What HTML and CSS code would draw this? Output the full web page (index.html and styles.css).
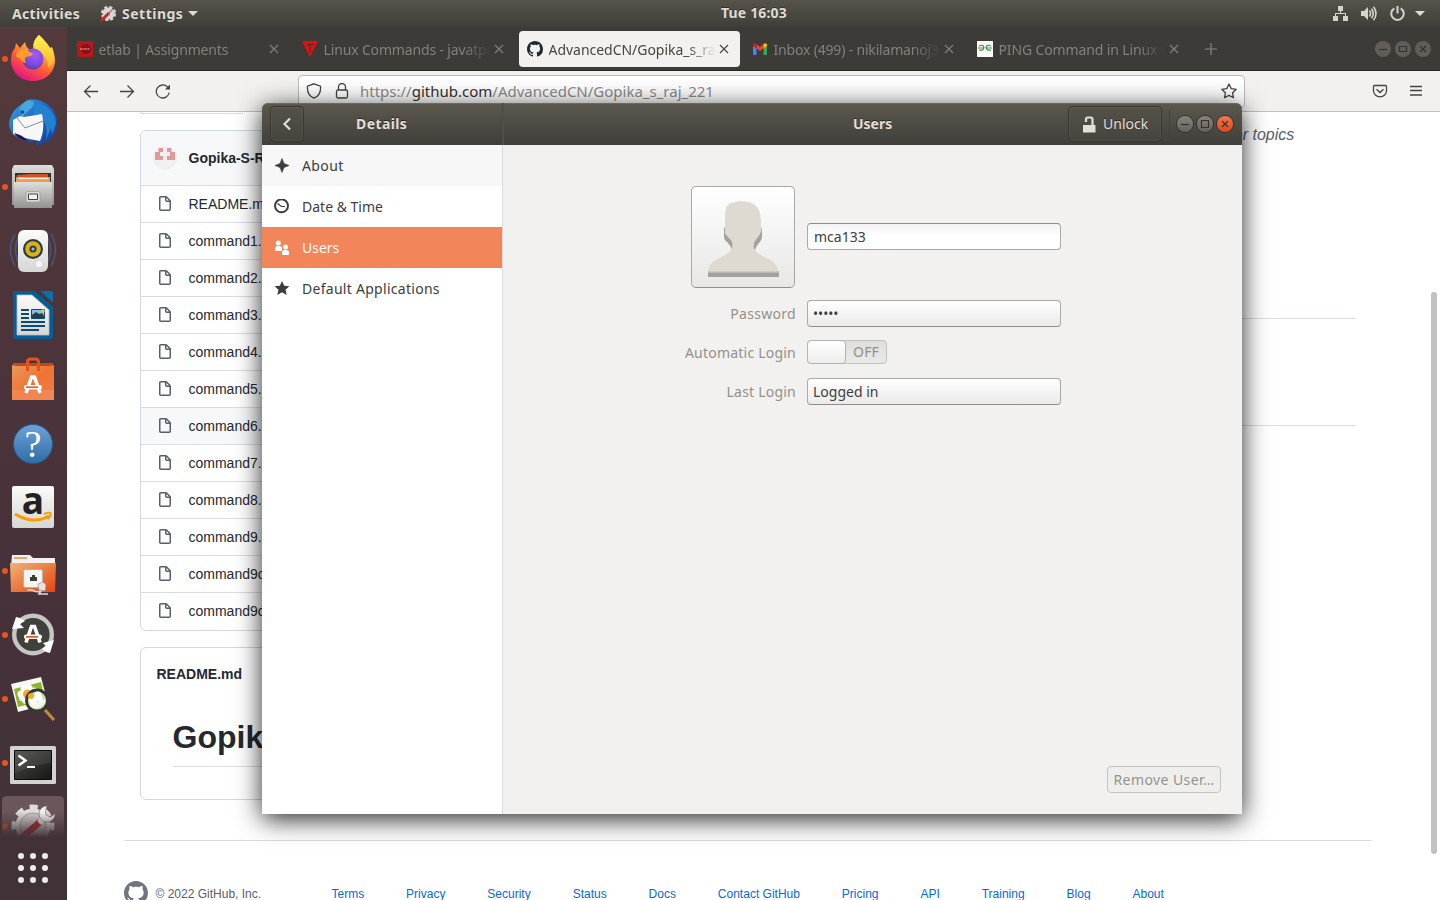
FILE: index.html
```html
<!DOCTYPE html>
<html lang="en">
<head>
<meta charset="utf-8">
<title>Desktop</title>
<link rel="stylesheet" href="styles.css">
</head>
<body>
<svg class="defs" width="0" height="0" aria-hidden="true">
  <defs>
    <symbol id="file" viewBox="0 0 16 16"><path fill="#57606a" fill-rule="evenodd" d="M3.75 1.5a.25.25 0 00-.25.25v11.5c0 .138.112.25.25.25h8.5a.25.25 0 00.25-.25V6H9.75A1.75 1.75 0 018 4.25V1.5H3.75zm5.75.56v2.19c0 .138.112.25.25.25h2.19L9.5 2.06zM2 1.75C2 .784 2.784 0 3.75 0h5.086c.464 0 .909.184 1.237.513l3.414 3.414c.329.328.513.773.513 1.237v8.086A1.75 1.75 0 0112.25 15h-8.5A1.75 1.75 0 012 13.25V1.75z"/></symbol>
    <symbol id="octocat" viewBox="0 0 16 16"><path fill="currentColor" d="M8 0C3.58 0 0 3.58 0 8c0 3.54 2.29 6.53 5.47 7.59.4.07.55-.17.55-.38 0-.19-.01-.82-.01-1.49-2.01.37-2.53-.49-2.69-.94-.09-.23-.48-.94-.82-1.13-.28-.15-.68-.52-.01-.53.63-.01 1.08.58 1.23.82.72 1.21 1.87.87 2.33.66.07-.52.28-.87.51-1.07-1.78-.2-3.64-.89-3.64-3.95 0-.87.31-1.59.82-2.15-.08-.2-.36-1.02.08-2.12 0 0 .67-.21 2.2.82.64-.18 1.32-.27 2-.27.68 0 1.36.09 2 .27 1.53-1.04 2.2-.82 2.2-.82.44 1.1.16 1.92.08 2.12.51.56.82 1.27.82 2.15 0 3.07-1.87 3.75-3.65 3.95.29.25.54.73.54 1.48 0 1.07-.01 1.93-.01 2.2 0 .21.15.46.55.38A8.013 8.013 0 0016 8c0-4.42-3.58-8-8-8z"/></symbol>
    <symbol id="cross" viewBox="0 0 10 10"><path d="M1 1l8 8M9 1l-8 8" stroke="currentColor" stroke-width="1.1" fill="none"/></symbol>
    <linearGradient id="ffBody" x1=".8" y1=".1" x2=".3" y2="1"><stop offset="0" stop-color="#fff44f"/><stop offset=".3" stop-color="#ffa930"/><stop offset=".6" stop-color="#ff5a36"/><stop offset="1" stop-color="#e3128a"/></linearGradient>
    <linearGradient id="ffTop" x1="0" y1="0" x2="0" y2="1"><stop offset="0" stop-color="#fff750"/><stop offset="1" stop-color="#ffb02e"/></linearGradient>
    <radialGradient id="ffOrb" cx=".6" cy=".3" r=".8"><stop offset="0" stop-color="#a05bf6"/><stop offset=".6" stop-color="#7a4be0"/><stop offset="1" stop-color="#4a3a9e"/></radialGradient>
    <linearGradient id="tb" x1="0" y1="0" x2="1" y2="1"><stop offset="0" stop-color="#3aa7ea"/><stop offset=".5" stop-color="#1c63c2"/><stop offset="1" stop-color="#163c8c"/></linearGradient>
    <linearGradient id="steel" x1="0" y1="0" x2="0" y2="1"><stop offset="0" stop-color="#dededc"/><stop offset="1" stop-color="#929290"/></linearGradient>
    <linearGradient id="white" x1="0" y1="0" x2="0" y2="1"><stop offset="0" stop-color="#fbfbfa"/><stop offset="1" stop-color="#d6d6d4"/></linearGradient>
    <linearGradient id="bag" x1="0" y1="0" x2="1" y2="1"><stop offset="0" stop-color="#e69a5c"/><stop offset=".5" stop-color="#f07434"/><stop offset="1" stop-color="#ee7d47"/></linearGradient>
    <linearGradient id="blue" x1="0" y1="0" x2="0" y2="1"><stop offset="0" stop-color="#6fa2d6"/><stop offset="1" stop-color="#2d6ea6"/></linearGradient>
    <linearGradient id="folder" x1="0" y1="0" x2="1" y2="1"><stop offset="0" stop-color="#efb47a"/><stop offset=".45" stop-color="#ea8145"/><stop offset="1" stop-color="#e4440f"/></linearGradient>
    <linearGradient id="screen" x1="0" y1="0" x2="1" y2="1"><stop offset="0" stop-color="#4c4c4a"/><stop offset="1" stop-color="#161616"/></linearGradient>
  </defs>
</svg>

<div class="desktop">
  <header class="panel">
    <div class="panel-left">
      <span class="panel-text activities">Activities</span>
      <svg class="panel-app" viewBox="0 0 16 16"><circle cx="8.5" cy="7.5" r="6" fill="#dad8d4"/><circle cx="8.5" cy="7.5" r="6.4" fill="none" stroke="#dad8d4" stroke-width="2.400" stroke-dasharray="3 2.030"/><path d="M1.800 14L8.500 7.500" stroke="#c22b2b" stroke-width="3" stroke-linecap="round"/><path d="M8.500 7.500l4-4" stroke="#8a8884" stroke-width="1.600"/></svg>
      <span class="panel-text settings">Settings</span>
      <i class="caret"></i>
    </div>
    <span class="panel-text clock">Tue 16:03</span>
    <div class="panel-right">
      <svg width="15" height="15" viewBox="0 0 15 15" fill="#d6d3cd"><path d="M5 0h5v5H8v2h5v3h2v5h-5v-5h2V8H3v2h2v5H0v-5h2V7h5V5H5z"/></svg>
      <svg width="16" height="15" viewBox="0 0 16 15"><path d="M0 5h3l4-4v13l-4-4H0z" fill="#d6d3cd"/><path d="M8.5 4.5q2 3 0 6M10.5 2.7q3.4 4.8 0 9.6M12.5.8q5 6.700 0 13.4" fill="none" stroke="#d6d3cd" stroke-width="1.600"/></svg>
      <svg width="15" height="15" viewBox="0 0 15 15" fill="none" stroke="#d6d3cd" stroke-width="2"><path d="M4.3 2.4a6.2 6.2 0 106.4 0M7.5 0v7.5"/></svg>
      <i class="caret"></i>
    </div>
  </header>

  <nav class="dock">
    <div class="app running"><svg viewBox="0 0 48 48"><path fill="url(#ffBody)" d="M30 0c5 5 8 8 10 12 3 2 6 7 6 13C46 37 37 46 24 46S2 37 2 25c0-5 1-9 4-12l1-5 4 5 5-6c1 4 2 6 4 7h4c0-6 2-10 6-14z"/><path fill="url(#ffTop)" d="M30 0c5 5 9 9 11 13l2-1c4 10 2 17-4 21 1-8-4-14-10-17-4-3-5-6-4-9 1-3 3-5 5-7z"/><circle cx="24" cy="24" r="10.500" fill="url(#ffOrb)"/><path fill="#ff9b2c" d="M7 22c0-6 5-9 11-8 2 3 4 4 6 4-1 4-4 3-7 4-2 2-1 4 0 6-5-1-6-6-10-6z"/></svg></div>
    <div class="app"><svg viewBox="0 0 48 48"><path fill="url(#tb)" d="M15 4C18-1 24 0 29 1c9 2 17 9 19 19 1 9-2 16-7 21l-4 3 1-3c-5 4-8 5-12 6l3-5C14 44 3 39 0 27 0 17 6 8 15 4z"/><path fill="#47a8e0" d="M11 9c3-7 9-9 14-6 0 6-6 8-10 13l-2 3z"/><path fill="#2480d0" d="M25 5c12-1 22 8 22 20l-4 10-1-6-5 12c2-13 0-22-12-25z"/><path fill="#f7f7f8" d="M4 21l7-4 4 1 18-3c2 9 2 18-2 27C20 40 10 38 4 35z"/><path d="M8 19l8 10 18-7" fill="none" stroke="#8a8d94"/><path fill="#261252" d="M5 34c7 2 10 4 14 8-7-1-11-4-14-8z"/><circle cx="13.500" cy="13" r="1.800" fill="#194d84"/></svg></div>
    <div class="app running"><svg viewBox="0 0 48 48"><path fill="url(#steel)" d="M5 2h38l2 4v36H3V6z"/><path d="M6 10h36v9H6z" fill="#33302c"/><path fill="#cf5624" d="M8 12l13-1 18 0v8H8z"/><path fill="#f19a55" d="M7 14h34v5H7z"/><path d="M9 15.500h30" stroke="#fff2d8" stroke-width="1.200"/><path fill="url(#steel)" d="M5 19h38v26H5z"/><rect x="17" y="28.500" width="14" height="10.500" rx="1.500" fill="#d9d9d7" stroke="#999" stroke-width=".7"/><path d="M19.500 31h9v5.500h-9z" fill="#f0f0ef" stroke="#444"/></svg></div>
    <div class="app"><svg viewBox="0 0 48 48"><path d="M6 7Q-3 22 6 39M10 9q-7 13 0 28M42 7q9 15 0 32M38 9q7 13 0 28" fill="none" stroke="#47577e" stroke-width="1.500"/><rect x="9" y="3" width="30" height="42" rx="6" fill="url(#white)"/><circle cx="24" cy="22" r="10" fill="#34383c"/><circle cx="24" cy="22" r="7.800" fill="#d4b31c"/><circle cx="24" cy="22" r="3.600" fill="#33414b"/><circle cx="24" cy="22" r="1.500" fill="#aeb8c0"/><circle cx="30" cy="37" r="4" fill="#f7f7f7" stroke="#c4c4c2" stroke-width=".7"/><path d="M15 35h4v4h-4z" fill="#dadada"/></svg></div>
    <div class="app"><svg viewBox="0 0 48 48"><path fill="#065e96" d="M6 0h19l19 17v29q0 2-2 2H6q-2 0-2-2V2q0-2 2-2z"/><path d="M31 0h11q2 0 2 2v10z" fill="#0b6fae"/><path d="M25 0h6l13 12v5z" fill="#4d3439"/><path fill="#065e96" d="M22 0h4l18 16v4z"/><path fill="url(#white)" stroke="#b9bdc0" stroke-width=".8" d="M8 4h15l17 15v25H8z"/><path d="M12 19h8M12 23h8M12 27h8M12 31h24M12 35h24M12 39h18" stroke="#0a4a76" stroke-width="1.800"/><path fill="#7fc1ec" stroke="#0a4a76" d="M22.500 18.500h13v9h-13z"/><path fill="#2d3c43" d="M23 27v-3l4-3 3 2 3-1 2 3v2z"/><circle cx="34" cy="20" r="1.700" fill="#f1cd3b"/></svg></div>
    <div class="app"><svg viewBox="0 0 48 48"><path fill="#bf4a17" d="M4 8h40v7H4z"/><path fill="url(#bag)" d="M3 10l4 1h34l4-1v35H3z"/><path fill="#f3905f" d="M3 35h42v10H3z" opacity=".6"/><path d="M18.500 16V7q0-3 3-3h5q3 0 3 3v9" stroke="#e4531c" stroke-width="3" fill="none"/><path d="M17 38L22.500 22h3L31 38" stroke="#fff" stroke-width="3.600" fill="none"/><rect x="15" y="30" width="18" height="4.500" rx="2" fill="#fff"/><path d="M17 32.200h12" stroke="#ec5b22" stroke-width="1.600"/></svg></div>
    <div class="app"><svg viewBox="0 0 48 48"><circle cx="24" cy="25" r="19.500" fill="url(#blue)" stroke="#245c90"/><text class="glyph help" x="24" y="38" text-anchor="middle">?</text></svg></div>
    <div class="app"><svg viewBox="0 0 48 48"><rect x="3" y="3" width="42" height="42" rx="2" fill="url(#white)"/><text class="glyph amazon" x="24" y="31" text-anchor="middle">a</text><path d="M6 31q18 11 34 2" stroke="#ff9900" stroke-width="3" fill="none"/><path d="M35 31q5-2 6.500-1 .5 2-2.500 6" stroke="#ff9900" stroke-width="1.900" fill="none"/></svg></div>
    <div class="app running"><svg viewBox="0 0 48 48"><path fill="#f2f1f0" d="M3 8h18l3 3h22v9H2z"/><path d="M5 11h13" stroke="#f0a173" stroke-width="2"/><path fill="url(#folder)" d="M1 16h46l-1 29H2z"/><rect x="14.500" y="22.500" width="19" height="18" rx="2" fill="#f4f4f2" stroke="#b5b0aa"/><path fill="#3d3d38" d="M21 34v-4h2v-2h3v2h2v4z"/><path d="M18 43c8-2 6 4 14 1l-2 3 9 0" stroke="#ddd" stroke-width="1.500" fill="none"/><path fill="#e4e4e2" stroke="#999" stroke-width=".7" d="M29 37l5-2 3 3-1 6-6-1z"/></svg></div>
    <div class="app running"><svg viewBox="0 0 48 48"><circle cx="24" cy="23.500" r="18.800" fill="#41413c" stroke="#c6c6c4" stroke-width="4.400"/><path d="M17 31.500L22.500 15.500h3L31 31.500" stroke="#fff" stroke-width="3.600" fill="none"/><rect x="15" y="23.500" width="18" height="4.600" rx="2" fill="#fff"/><path d="M17 25.800h12" stroke="#e95420" stroke-width="1.800"/><path fill="#fff" d="M7 6L3 18l12-1-4-4 5-3-5-3zM41 42l4-13-11 3 3 3-4 3 4 3z"/></svg></div>
    <div class="app running"><svg viewBox="0 0 48 48"><path fill="#f7f7f4" d="M2 9L32 2l7 27-30 8z"/><path fill="#91b52a" d="M5 14l27-7 4 18-27 7z"/><g fill="#fff"><circle cx="12" cy="19" r="3.500"/><circle cx="15" cy="14" r="3.500"/><circle cx="20" cy="13" r="3.500"/><circle cx="25" cy="16" r="3.500"/><circle cx="25" cy="21" r="3.500"/><circle cx="17" cy="25" r="4"/><circle cx="13" cy="23" r="3"/></g><circle cx="18.500" cy="19" r="4.500" fill="#f1ab23"/><circle cx="28" cy="25.500" r="10.500" fill="#cfdcae" stroke="#353735" stroke-width="2.800"/><path d="M20 28q9 1 16-4v4q-7 9-15 3z" fill="#fff" opacity=".8"/><g fill="#fff"><circle cx="24" cy="25" r="4"/><circle cx="29" cy="20" r="3.500"/><circle cx="31" cy="24" r="3"/></g><circle cx="22" cy="21" r="3" fill="#f1ab23"/><path d="M36 35l9 10" stroke="#bc8c3c" stroke-width="3.200"/></svg></div>
    <div class="app running"><svg viewBox="0 0 48 48"><rect x="1" y="7" width="46" height="38" rx="1.500" fill="#d2d2d0"/><path fill="url(#screen)" stroke="#0c0c0c" d="M5.500 11.500h37v29h-37z"/><path d="M6 12h36v12Q24 26 6 34z" fill="#fff" opacity=".08"/><path d="M9.500 16.500l7 5-7 5" stroke="#fff" stroke-width="2.500" fill="none"/><path d="M18 28h8" stroke="#fff" stroke-width="2"/></svg></div>
    <div class="app running active"><svg viewBox="0 0 48 48"><circle cx="24" cy="23" r="17.500" fill="#dddcda"/><circle cx="24" cy="23" r="19" fill="none" stroke="#dddcda" stroke-width="5" stroke-dasharray="8.200 6.720" stroke-dashoffset="4"/><circle cx="24" cy="23" r="13" fill="#cfcbcb" stroke="#a39d9e"/><path d="M10 37l21-18" stroke="#b72424" stroke-width="6.500"/><path d="M30 20l8-7" stroke="#efefed" stroke-width="5"/><path d="M38 3a8 8 0 108 8l-4.500 3-4.500-2-.5-4.500z" fill="#f0f0ee" stroke="#8c8888" stroke-width=".8"/></svg></div>
    <svg class="apps-grid" viewBox="0 0 30 30" fill="#eeeeec"><circle cx="3" cy="3" r="3"/><circle cx="15" cy="3" r="3"/><circle cx="27" cy="3" r="3"/><circle cx="3" cy="15" r="3"/><circle cx="15" cy="15" r="3"/><circle cx="27" cy="15" r="3"/><circle cx="3" cy="27" r="3"/><circle cx="15" cy="27" r="3"/><circle cx="27" cy="27" r="3"/></svg>
  </nav>

  <main class="browser">
    <div class="tabs">
      <div class="tab t1"><svg class="fav" viewBox="0 0 16 16"><path fill="#b5191c" d="M0 0h16v16H0z"/><circle cx="9" cy="8" r="5" fill="#8e1014"/><path d="M3 8h10" stroke="#e6b8b8" stroke-width="1.200" stroke-dasharray="2 .5"/></svg><span class="tab-title">etlab | Assignments</span><svg class="x"><use href="#cross"/></svg></div>
      <div class="tab t2"><svg class="fav" viewBox="0 0 16 16"><path fill="#f00a0a" d="M0 0h16L8 16z"/><path d="M4.500 3.500h7M8 3.500v8" stroke="#3c3b37" stroke-width="1.600"/></svg><span class="tab-title">Linux Commands - javatpoint</span><svg class="x"><use href="#cross"/></svg></div>
      <div class="tab t3 current"><svg class="fav dark"><use href="#octocat"/></svg><span class="tab-title">AdvancedCN/Gopika_s_raj_221</span><svg class="x"><use href="#cross"/></svg></div>
      <div class="tab t4"><svg class="fav" viewBox="0 0 16 16"><path fill="#4285f4" d="M1 4l3.500 2.500V14H2q-1 0-1-1z"/><path fill="#34a853" d="M15 4l-3.500 2.500V14H14q1 0 1-1z"/><path fill="#ea4335" d="M4.500 3L8 6l3.500-3v4.500L8 10 4.500 7.500z"/><path fill="#c5221f" d="M1 4q0-2 2-1.800L4.500 3v4.500L1 5z"/><path fill="#fbbc04" d="M15 4q0-2-2-1.800L11.500 3v4.500L15 5z"/></svg><span class="tab-title">Inbox (499) - nikilamanoj3@gmail.com</span><svg class="x"><use href="#cross"/></svg></div>
      <div class="tab t5"><svg class="fav" viewBox="0 0 16 16"><path fill="#fff" d="M0 0h16v16H0z"/><path d="M2 5q4-2 5 1.500-.5 3.500-5 2.500M1 7h6M14 5q-4-2-5 1.500 .5 3.500 5 2.500M15 7H9" stroke="#3d9142" stroke-width="1.200" fill="none"/></svg><span class="tab-title">PING Command in Linux with</span><svg class="x"><use href="#cross"/></svg></div>
      <svg class="plus" viewBox="0 0 12 12"><path d="M6 0v12M0 6h12" stroke="#8a8880" stroke-width="1.200"/></svg>
      <div class="win-btns dim"><i class="wb"><svg viewBox="0 0 16 16"><path d="M4 8.500h8"/></svg></i><i class="wb"><svg viewBox="0 0 16 16"><path d="M4.500 5.500h7v5h-7z"/></svg></i><i class="wb"><svg viewBox="0 0 16 16"><path d="M5 5l6 6M11 5l-6 6"/></svg></i></div>
    </div>
    <div class="toolbar">
      <div class="nav-btns">
        <svg viewBox="0 0 16 16"><path d="M15 8.500H1.500M7.500 2.500l-6 6 6 6"/></svg>
        <svg viewBox="0 0 16 16"><path d="M1 8.500h13.500M8.500 2.500l6 6-6 6"/></svg>
        <svg viewBox="0 0 16 16"><path d="M14.200 9.500A6.500 6.500 0 1 1 12.500 4L14.300 5.700"/><path d="M15 1.500v5H10z" fill="#46443f" stroke="none"/></svg>
      </div>
      <div class="urlbar">
        <svg viewBox="0 0 16 16"><path d="M8 .8l6.500 2.400c.5 5-.8 9.500-6.500 12C2.300 12.700 1 8.200 1.500 3.200z"/></svg>
        <svg viewBox="0 0 16 16"><rect x="2.500" y="7" width="11" height="8" rx="1.500"/><path d="M4.500 7V4a3.500 3.500 0 017 0v3"/></svg>
        <span class="url">https://<b>github.com</b>/AdvancedCN/Gopika_s_raj_221</span>
        <svg viewBox="0 0 16 16"><path d="M8 1l2.200 4.600 5 .7-3.600 3.500.9 5L8 12.400l-4.500 2.400.9-5L.8 6.300l5-.7z" stroke-linejoin="round"/></svg>
      </div>
      <div class="tool-right">
        <svg viewBox="0 0 16 16"><path d="M2.500 2.500h11q1 0 1 1V8a6.500 5.800 0 01-13 0V3.500q0-1 1-1zM4.500 6.300L8 9.500l3.500-3.200"/></svg>
        <svg viewBox="0 0 16 16"><path d="M2 3.500h12M2 7.500h12M2 12h12"/></svg>
      </div>
    </div>
    <div class="page">
      <div class="branch"></div>
      <div class="columns">
        <div class="files-col">
          <section class="box">
            <div class="commit"><svg class="avatar" viewBox="0 0 24 24"><circle cx="12" cy="12" r="12" fill="#f0f0f0"/><path fill="#df9a9a" d="M5.500 2H10v4H7v4h3v4H2V6h3.500zM18.500 2H14v4h3v4h-3v4h8V6h-3.500z"/></svg><b>Gopika-S-Raj</b></div>
            <div class="row"><svg><use href="#file"/></svg>README.md</div>
            <div class="row"><svg><use href="#file"/></svg>command1.png</div>
            <div class="row"><svg><use href="#file"/></svg>command2.png</div>
            <div class="row"><svg><use href="#file"/></svg>command3.png</div>
            <div class="row"><svg><use href="#file"/></svg>command4.png</div>
            <div class="row"><svg><use href="#file"/></svg>command5.png</div>
            <div class="row hover"><svg><use href="#file"/></svg>command6.png</div>
            <div class="row"><svg><use href="#file"/></svg>command7.png</div>
            <div class="row"><svg><use href="#file"/></svg>command8.png</div>
            <div class="row"><svg><use href="#file"/></svg>command9.png</div>
            <div class="row"><svg><use href="#file"/></svg>command9c.png</div>
            <div class="row"><svg><use href="#file"/></svg>command9c.png</div>
          </section>
          <section class="box readme"><b>README.md</b><h1>Gopika</h1></section>
        </div>
        <aside class="about">
          <p>No description, website, or topics provided.</p>
          <hr class="h1r"><hr class="h2r">
        </aside>
      </div>
      <footer class="foot">
        <svg class="mark"><use href="#octocat"/></svg><span class="copy">© 2022 GitHub, Inc.</span>
        <div class="links"><a>Terms</a><a>Privacy</a><a>Security</a><a>Status</a><a>Docs</a><a>Contact GitHub</a><a>Pricing</a><a>API</a><a>Training</a><a>Blog</a><a>About</a></div>
      </footer>
      <i class="scroll"></i>
    </div>
  </main>
</div>

<div class="window">
  <div class="titlebar">
    <div class="tb-left"><span class="hbtn back"><svg viewBox="0 0 16 16"><path d="M11 2.500L5.500 8l5.500 5.500" fill="none" stroke="#e3dfd6" stroke-width="2.200"/></svg></span><b class="t-details">Details</b></div>
    <div class="tb-main">
      <b class="t-users">Users</b>
      <span class="hbtn unlock"><svg viewBox="0 0 13 17"><path d="M0 9h12.500v7.500H0z" fill="#e3dfd6"/><path d="M3 6V3.500Q3 1.500 5 1.500h2.500q2 0 2 2V9" stroke="#e3dfd6" stroke-width="2.200" fill="none"/></svg><span>Unlock</span></span>
      <i class="sep"></i>
      <div class="win-btns"><i class="wb"><svg viewBox="0 0 16 16"><path d="M4 8.500h8"/></svg></i><i class="wb"><svg viewBox="0 0 16 16"><path d="M4.500 4.500h7v7h-7z"/></svg></i><i class="wb red"><svg viewBox="0 0 16 16"><path d="M5 5l6 6M11 5l-6 6"/></svg></i></div>
    </div>
  </div>
  <div class="win-body">
    <ul class="side">
      <li class="shade"><svg viewBox="0 0 16 16"><path fill="#3d3d3d" d="M8 .5l2 5 5 2-5 2-2 5-2-5-5-2 5-2z" stroke="#3d3d3d" stroke-width=".6"/></svg><span class="s1">About</span></li>
      <li><svg viewBox="0 0 16 16" fill="none" stroke="#3d3d3d"><circle cx="7.500" cy="6.800" r="6.500" stroke-width="2"/><path d="M3.500 4.500L7.500 7.500h3.500" stroke-width="1.200"/></svg><span class="s2">Date &amp; Time</span></li>
      <li class="sel"><svg viewBox="0 0 16 16" fill="#fff"><circle cx="4.300" cy="3" r="2.500"/><path d="M1 11V8.500q0-2.500 2.500-2.500h2Q8 6 8 8.500V11z"/><circle cx="11.500" cy="7" r="2.500"/><path d="M8 15v-2.500q0-2.500 2.500-2.500h2Q15 10 15 12.500V15z"/></svg><span class="s3">Users</span></li>
      <li><svg viewBox="0 0 16 16"><path fill="#3d3d3d" d="M8 0l2.200 4.800 5.200.5-3.900 3.500 1.200 5.200L8 11.300 3.300 14l1.200-5.200L.6 5.300l5.200-.5z"/></svg><span class="s4">Default Applications</span></li>
    </ul>
    <div class="content">
      <div class="form">
        <span class="face"><svg viewBox="0 0 72 78"><path fill="#a2a19d" d="M17 27v9q0 3 3 5 4 4 5 8h23q1-4 4-7 3-3 3-6v-9zM1 70h71v6H1z"/><path fill="#dedad2" d="M20 5l2-1-1-2 2 1 1-2 1 1C31-.5 42-.5 48 4c5 4 6 10 6 22 1 3 0 5-1 7-2 4-5 6-6 9-1 5 0 7 4 10 4 4 11 5 16 10 3 3 4 6 4 9H1c0-4 2-7 5-10 5-4 12-6 16-10 3-3 4-6 3-10-1-3-5-5-7-9v-7c0-8 0-16 2-21z"/><path fill="#bab9b4" d="M1 70.500h71v1.500H1z"/></svg></span>
        <span class="field name"><span class="f1">mca133</span></span>
        <label class="l1">Password</label><span class="field btn"><span class="dots">•••••</span></span>
        <label class="l2">Automatic Login</label><span class="switch"><i class="knob"></i><span>OFF</span></span>
        <label class="l3">Last Login</label><span class="field btn"><span class="f2">Logged in</span></span>
      </div>
      <span class="remove">Remove User…</span>
    </div>
  </div>
</div>
</body>
</html>
```
FILE: styles.css
```css
* { box-sizing: border-box; }
body { margin: 0; width: 1440px; height: 900px; overflow: hidden; position: relative; font-family: "Noto Sans", sans-serif; font-size: 14px; }
svg { display: block; flex: none; }
.defs { position: absolute; }
.desktop { display: grid; grid-template: 27px 873px / 67px 1373px; }

/* top panel */
.panel { grid-column: 1 / 3; display: grid; grid-template-columns: 1fr auto 1fr; align-items: center; background: linear-gradient(#56534a, #3f3e39); padding: 0 15px 0 12px; }
.panel-left, .panel-right { display: flex; align-items: center; }
.panel-text { color: #dfdbd2; font-weight: 700; font-size: 14px; line-height: 26px; text-shadow: 0 -1px rgba(0,0,0,.35); }
.activities { width: 88px; letter-spacing: .3px; }
.panel-app { width: 16px; height: 16px; margin-right: 6px; }
.settings { width: 66px; letter-spacing: .5px; }
.clock { margin: -2px 0 0 71px; letter-spacing: .15px; }
.caret { border: 5px solid transparent; border-top-color: #dfdbd2; border-bottom: 0; }
.panel-right { justify-content: flex-end; gap: 13px; }
.panel-right .caret { margin-left: -3px; }

/* dock */
.dock { background: linear-gradient(#543a3c, #4c343a 35%, #46313a 70%, #403236); display: flex; flex-direction: column; height: 873px; }
.app { position: relative; height: 64px; flex: none; padding: 8px 0 0 9px; }
.app > svg { width: 48px; height: 48px; }
.running::before { content: ""; position: absolute; left: 2px; top: 29px; width: 6px; height: 6px; border-radius: 50%; background: #e95420; }
.app.active { margin: 1px 3px 0 2px; padding: 7px 0 0 7px; height: 45px; overflow: hidden; border-radius: 4px 4px 0 0; background: #6a565b; -webkit-mask-image: linear-gradient(#000 35%, transparent 92%); mask-image: linear-gradient(#000 35%, transparent 92%); }
.app.active::before { left: 0; top: 28px; }
.apps-grid { width: 30px; height: 30px; margin: 12px 0 0 18px; }
.glyph { fill: #fff; font-family: "Liberation Serif", serif; font-size: 38px; }
.amazon { fill: #222; font-family: "Open Sans", sans-serif; font-weight: 700; font-size: 37px; }

/* browser */
.browser { display: flex; flex-direction: column; min-width: 0; overflow: hidden; }
.tabs { height: 44px; flex: none; background: #3c3b37; border-bottom: 1px solid #262421; display: flex; align-items: center; padding-left: 2px; }
.tab { width: 221px; height: 36px; margin-right: 4px; display: flex; align-items: center; padding-left: 8px; color: #83817b; border-radius: 4px; }
.tab.current { background: #f2f1f0; color: #46453f; }
.fav { width: 16px; height: 16px; margin-right: 5.5px; }
.fav.dark { color: #24292f; }
.tab-title { width: 167.5px; padding-top: 2px; white-space: nowrap; overflow: hidden; font-size: 14px; letter-spacing: -.15px; margin-right: 3px; -webkit-mask-image: linear-gradient(90deg, #000 83%, transparent); mask-image: linear-gradient(90deg, #000 83%, transparent); }
.t3 .tab-title { letter-spacing: -.03px; }
.t4 .tab-title { letter-spacing: -.18px; }
.t5 .tab-title { letter-spacing: -.13px; }
.x { width: 10px; height: 10px; }
.plus { width: 12px; height: 12px; margin: 1px 0 0 11px; }
.win-btns { display: flex; gap: 4px; }
.dim { margin-left: 158px; }
.wb { width: 16px; height: 16px; border-radius: 50%; background: linear-gradient(#86847c, #65635c); box-shadow: 0 0 0 1px #33322e; }
.wb svg { width: 16px; height: 16px; fill: none; stroke: #34332f; stroke-width: 1.2; }
.dim .wb { background: #605e56; box-shadow: none; }
.wb.red { background: linear-gradient(#f2764b, #df4a18); }

.toolbar { height: 41px; flex: none; background: #f2f1f0; border-bottom: 1px solid #c1c0be; display: flex; align-items: center; padding-left: 16px; }
.toolbar svg { width: 16px; height: 16px; fill: none; stroke: #46443f; stroke-width: 1.3; }
.nav-btns { display: flex; gap: 20px; width: 215px; }
.urlbar { width: 947px; height: 33px; background: #fff; border: 1px solid #bdbbb8; border-radius: 4px; display: flex; align-items: center; padding: 0 7px; gap: 12px; }
.url { font-size: 15px; color: #8d8c89; flex: 1; margin-left: -2px; white-space: nowrap; }
.url b { font-weight: 400; color: #33322e; }
.tool-right { display: flex; gap: 20px; margin-left: 127px; }

.page { flex: 1; min-height: 0; position: relative; background: #fff; font-family: "Liberation Sans", sans-serif; color: #24292f; overflow: hidden; }
.branch { width: 103px; height: 2px; margin-left: 73px; border: solid #d8dce1; border-width: 0 1px 1px; border-radius: 0 0 4px 4px; }
.columns { display: flex; justify-content: space-between; padding: 16px 84px 0 73px; height: 726px; }
.files-col { width: 896px; }
.box { border: 1px solid #d0d7de; border-radius: 6px; overflow: hidden; }
.commit { height: 54px; background: #f6f8fa; display: flex; align-items: center; padding-left: 12px; font-size: 14px; }
.avatar { width: 24px; height: 24px; margin-right: 11.5px; }
.row { height: 37px; border-top: 1px solid #d8dee4; display: flex; align-items: center; padding-left: 16px; font-size: 14px; }
.row:last-child { height: 38px; padding-bottom: 1px; }
.row svg { width: 16px; height: 16px; margin-right: 15.5px; }
.row.hover { background: #f6f8fa; }
.readme { height: 153px; margin-top: 16px; padding: 18px 15.5px; font-size: 14px; line-height: 17px; }
.readme b { display: block; }
.readme h1 { margin: 34px 16px 0; font-size: 32px; line-height: 40px; height: 50px; border-bottom: 1px solid #d8dee4; }
.about { width: 296px; font-size: 16px; line-height: 24px; color: #57606a; }
.about p { font-style: italic; margin: -7px 0 0 -.5px; }
.about hr { border: 0; border-bottom: 1px solid #d8dee4; margin: 0; }
.about .h1r { padding-top: 147px; }
.about .h2r { padding-top: 106px; }
.foot { margin: 0 68px 0 57px; border-top: 1px solid #d8dee4; padding-top: 40px; display: flex; align-items: flex-start; font-size: 12px; color: #57606a; }
.mark { width: 24px; height: 24px; color: #6e7781; }
.copy { width: 176px; margin-left: 7.5px; line-height: 26px; }
.links { width: 832.5px; display: flex; justify-content: space-between; line-height: 26px; color: #0969da; }
.scroll { position: absolute; right: 3px; top: 180px; width: 6px; height: 562px; border-radius: 3px; background: #c1c1c1; }

/* settings window */
.window { position: absolute; left: 262px; top: 103px; width: 980px; height: 711px; border-radius: 6px 6px 0 0; box-shadow: 0 5px 26px rgba(0,0,0,.85); color: #3d3d3d; }
.titlebar { height: 42px; display: flex; border-radius: 6px 6px 0 0; background: linear-gradient(#5b584e, #403f3a); box-shadow: inset 0 1px #6c695d; color: #e3dfd6; text-shadow: 0 -1px rgba(0,0,0,.5); }
.titlebar b { padding-bottom: 2px; letter-spacing: .4px; }
.tb-left { width: 241px; display: flex; align-items: center; border-right: 1px solid #4a4941; padding-left: 8px; }
.hbtn { border: 1px solid #38372f; border-radius: 4px; background: linear-gradient(#555248, #45443e); display: flex; align-items: center; height: 36px; box-shadow: inset 0 0 0 1px rgba(255,255,255,.05); }
.back { width: 34px; justify-content: center; }
.back svg { width: 16px; height: 16px; }
.titlebar .t-details { margin-left: 52px; }
.tb-main { flex: 1; display: flex; align-items: center; border-left: 1px solid #56534a; }
.titlebar .t-users { width: 215px; margin-left: 349px; letter-spacing: 0; }
.unlock { width: 94px; padding-left: 14px; }
.unlock svg { width: 13px; height: 17px; margin-right: 7px; }
.unlock span { padding-bottom: 2px; }
.sep { width: 1px; height: 28px; background: #403f39; margin: 0 7px 0 7px; }
.win-body { display: flex; height: 669px; }
.side { list-style: none; margin: 0; padding: 0; width: 241px; background: #fff; border-right: 1px solid #dadada; }
.side li { height: 41px; display: flex; align-items: center; padding-left: 12px; }
.side li svg { width: 16px; height: 16px; margin-right: 12px; }
.s1 { letter-spacing: .4px; }
.s4 { letter-spacing: .28px; }
.side .shade { background: #f7f7f7; }
.side .sel { background: #f28559; color: #fff; }
.content { flex: 1; background: #f2f1f0; padding: 41px 21px 21px 182px; display: flex; flex-direction: column; justify-content: space-between; }
.form { display: grid; grid-template-columns: 111px 254px; grid-template-rows: 102px 27px 27px 27px; gap: 12px 11px; align-items: center; justify-items: end; }
.face { width: 104px; height: 102px; margin-right: 1px; border: 1px solid #aba9a6; border-bottom-color: #8f8d8a; border-radius: 5px; background: linear-gradient(#fff, #e8e7e6); padding: 14px 0 0 15px; }
.face svg { width: 72px; height: 78px; }
.form label { color: #929089; white-space: nowrap; letter-spacing: .22px; }
.form .l1 { letter-spacing: .3px; }
.field { width: 254px; height: 27px; border: 1px solid #aba9a6; border-bottom-color: #8f8d8a; border-radius: 4px; background: linear-gradient(#fff, #ebeae9); padding-left: 5px; line-height: 25px; }
.field.name { margin-top: -1px; background: linear-gradient(#f3f3f3, #fff 50%); border-color: #8f8d8a #aba9a6 #aba9a6; padding-left: 6px; }
.dots { font-size: 13.5px; }
.switch { justify-self: start; width: 80px; height: 24px; border: 1px solid #c3c1be; border-radius: 4px; background: linear-gradient(#dfdedd, #eaeae9); display: flex; align-items: center; color: #92908b; gap: 7px; margin-top: -1px; }
.switch span { padding-bottom: 1px; letter-spacing: .2px; }
.knob { width: 39px; height: 24px; margin-left: -1px; border: 1px solid #b5b3b0; border-radius: 4px; background: linear-gradient(#fff, #eeedec); }
.remove { align-self: flex-end; width: 114px; height: 27px; border: 1px solid #c5c3c0; border-radius: 4px; background: #eeeeec; color: #95938e; line-height: 25px; text-align: center; white-space: nowrap; letter-spacing: .42px; }
```
